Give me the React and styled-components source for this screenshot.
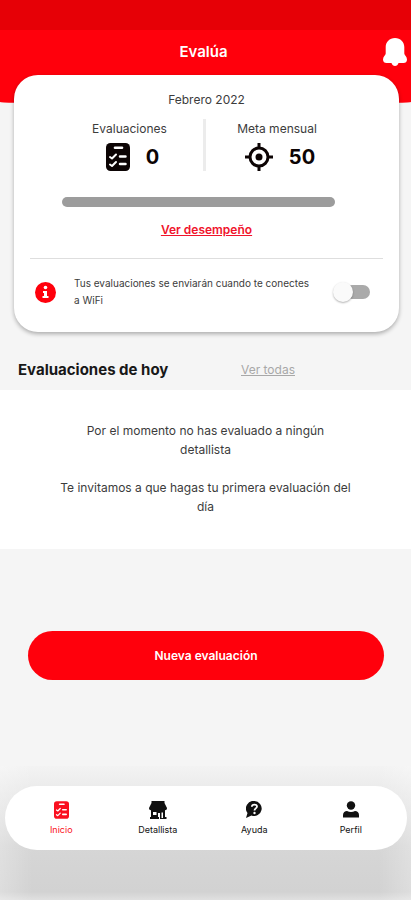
import React, { useState } from "react";
import styled, { createGlobalStyle } from "styled-components";

const GlobalStyle = createGlobalStyle`
  *, *::before, *::after { box-sizing: border-box; }
  body { margin: 0; background: #f5f5f5; color: #3c3c3c; font-family: Inter, "Open Sans", sans-serif; }
  h1, h2, p, dl, dt, dd { margin: 0; }
`;

const Page = styled.div`
  min-height: 100vh;
  display: flex;
  flex-direction: column;
`;
const Header = styled.header`
  padding-bottom: 30px;
  margin-bottom: -29px;
  background: #ff000c;
  border-radius: 0 0 50% 50% / 0 0 2px 2px;
`;
const StatusBar = styled.div`
  height: 30px;
  background: #e60006;
`;
const TitleRow = styled.div`
  height: 44px;
  display: grid;
  grid-template-columns: 1fr auto 1fr;
  align-items: center;
  padding-right: 4px;
`;
const Title = styled.h1`
  grid-column: 2;
  font-size: 15px;
  line-height: 20px;
  font-weight: 600;
  color: #fff;
`;
const BellButton = styled.button`
  justify-self: end;
  display: flex;
  padding: 0;
  border: 0;
  background: none;
  color: #fff;
`;
const Card = styled.section`
  margin: 0 12px 0 14px;
  padding: 15px 16px 23px;
  background: #fff;
  border-radius: 24px;
  box-shadow: 0 2px 4px rgba(0, 0, 0, 0.3);
`;
const Month = styled.p`
  font-size: 12px;
  line-height: 20px;
  text-align: center;
`;
const Stats = styled.dl`
  display: flex;
  justify-content: center;
  margin-top: 9px;
  padding-right: 8px;
`;
const Stat = styled.div`
  width: 146px;
  display: flex;
  flex-direction: column;
  align-items: center;
  gap: 4px;
  & + & { border-left: 3px solid #ececec; }
`;
const StatLabel = styled.dt`
  font-size: 12px;
  line-height: 20px;
`;
const StatValue = styled.dd`
  display: flex;
  align-items: center;
  gap: 16px;
  padding-left: 6px;
  font-size: 20px;
  line-height: 28px;
  font-weight: 700;
  color: #0c0404;
`;
const ProgressTrack = styled.div`
  height: 10px;
  margin: 26px 48px 0 32px;
  border-radius: 5px;
  background: #9c9c9c;
`;
const TextLink = styled.a`
  font-size: 12px;
  line-height: 20px;
  font-weight: ${(p) => (p.$accent ? 600 : 400)};
  color: ${(p) => (p.$accent ? "#f0142c" : "#a8a8a8")};
  text-decoration: underline;
`;
const LinkRow = styled.div`
  display: flex;
  justify-content: center;
  padding: 13px 0 18px;
  border-bottom: 1px solid #dedede;
`;
const WifiRow = styled.div`
  display: flex;
  align-items: center;
  padding: 16px 13px 0 5px;
`;
const WifiLabel = styled.label`
  flex: 1;
  margin: 0 20px 0 18px;
  font-size: 10px;
  line-height: 17px;
`;
const Switch = styled.input`
  appearance: none;
  width: 37px;
  height: 20px;
  margin: 0;
  display: flex;
  align-items: center;
  &::before {
    content: "";
    width: 20px;
    height: 20px;
    border-radius: 50%;
    background: #fafafa;
    box-shadow: 0 1px 2px rgba(0, 0, 0, 0.3);
    z-index: 1;
  }
  &::after {
    content: "";
    flex: 1;
    height: 14px;
    margin-left: -8px;
    border-radius: 7px;
    background: #aaa;
  }
  &:checked { flex-direction: row-reverse; }
  &:checked::after { margin: 0 -8px 0 0; }
`;
const SectionHead = styled.div`
  display: grid;
  grid-template-columns: 223px 1fr;
  align-items: center;
  padding: 28px 18px 10px;
`;
const SectionTitle = styled.h2`
  font-size: 15px;
  line-height: 20px;
  font-weight: 700;
  color: #181818;
`;
const EmptyState = styled.section`
  display: flex;
  flex-direction: column;
  gap: 19px;
  padding: 31px 52px 33px;
  background: #fff;
  font-size: 12px;
  line-height: 19px;
  text-align: center;
`;
const PrimaryButton = styled.button`
  height: 49px;
  margin: 82px 27px 0 28px;
  border: 0;
  border-radius: 25px;
  background: #ff000c;
  color: #fff;
  font: 600 12px/20px Inter, "Open Sans", sans-serif;
`;
const Footer = styled.footer`
  margin-top: auto;
  padding: 20px 4px 50px 5px;
  background:
    linear-gradient(90deg, rgba(255, 255, 255, 0.25), transparent 8%, transparent 92%, rgba(255, 255, 255, 0.25)),
    linear-gradient(#f3f3f3, #ececec 15%, #d6d6d6 60%, #d2d2d2 94%, #e0e0e0);
`;
const Nav = styled.nav`
  height: 64px;
  display: grid;
  grid-template-columns: repeat(4, 1fr);
  padding: 0 8px;
  border-radius: 32px;
  background: #fff;
`;
const NavLink = styled.a`
  display: flex;
  flex-direction: column;
  align-items: center;
  justify-content: center;
  gap: 4px;
  padding-top: 2px;
  font-size: 9px;
  line-height: 14px;
  text-decoration: none;
  color: ${(p) => (p.$active ? "#fa1020" : "#111")};
`;

const BellIcon = () => (
  <svg width="24" height="28" viewBox="0 0 24 28" fill="currentColor" aria-hidden="true">
    <path d="M12 0C6.500 0 2.700 4 2.700 9v6.500C2.700 17 0 18.500 0 21.500 0 24 1.500 25 3.500 25h5c.5 2 2 3 3.500 3s3-1 3.500-3h5c2 0 3.500-1 3.500-3.500 0-3-2.700-4.500-2.700-6V9C21.300 4 17.500 0 12 0Z" />
  </svg>
);
const ChecklistIcon = ({ size = 28 }) => (
  <svg width={Math.round((size * 24) / 28)} height={size} viewBox="0 0 24 28" aria-hidden="true">
    <rect width="24" height="28" rx="4.500" fill="currentColor" />
    <g fill="none" stroke="#fff" strokeLinecap="round" strokeLinejoin="round">
      <path d="M9 4.800h7" strokeWidth="2.600" />
      <path d="M14 13.500h5.500M14 21h5.500" strokeWidth="2.500" />
      <path d="m4 14 2 1.500 4-4M4 21.500 6 23l4-4" strokeWidth="2" />
    </g>
  </svg>
);
const TargetIcon = () => (
  <svg width="28" height="28" viewBox="0 0 28 28" fill="none" stroke="currentColor" strokeWidth="3" aria-hidden="true">
    <circle cx="14" cy="14" r="9" />
    <circle cx="14" cy="14" r="3.500" fill="currentColor" stroke="none" />
    <path d="M14 0v6M14 22v6M0 14h6M22 14h6" />
  </svg>
);
const InfoIcon = () => (
  <svg width="21" height="21" viewBox="0 0 21 21" aria-hidden="true">
    <circle cx="10.500" cy="10.500" r="10.500" fill="#ff000c" />
    <circle cx="10.500" cy="5.500" r="1.800" fill="#fff" />
    <path d="M8 9h4v5h1.500v2h-6v-2H9v-3H8z" fill="#fff" />
  </svg>
);
const StoreIcon = () => (
  <svg width="18" height="18" viewBox="0 0 18 18" fill="currentColor" aria-hidden="true">
    <path d="M2.500 0h13v2L18 7c0 2-1.500 2.500-3 2H3C1.500 9.500 0 9 0 7l2.500-5Z" />
    <path d="M2 8h14v8h1.500v2H11v-6H9v4h1v2H1v-2h1zM4 11v3h3.500v-3z" fillRule="evenodd" />
    <path d="M12.500 11.500h1.500V17h-1.500z" fill="#fff" />
  </svg>
);
const HelpIcon = () => (
  <svg width="16" height="18" viewBox="0 0 16 18" aria-hidden="true">
    <path fill="currentColor" d="M8.500 0a7.500 7.500 0 1 1-3 14.500L0 17l1.500-5A7.500 7.500 0 0 1 8.500 0Z" />
    <path fill="none" stroke="#fff" strokeWidth="1.800" d="M5.800 5.800C6 3 11 3 11 5.500c0 2-2.500 1.800-2.500 4" />
    <circle cx="8.500" cy="12" r="1.200" fill="#fff" />
  </svg>
);
const PersonIcon = () => (
  <svg width="16" height="18" viewBox="0 0 16 18" fill="currentColor" aria-hidden="true">
    <circle cx="8" cy="4.500" r="4.200" />
    <path d="M0 16.500V14c0-2.500 2-4 4-4 2.500 1.300 5.500 1.300 8 0 2 0 4 1.500 4 4v2.500Z" />
  </svg>
);

const navItems = [
  { label: "Inicio", icon: <ChecklistIcon size={18} />, active: true },
  { label: "Detallista", icon: <StoreIcon /> },
  { label: "Ayuda", icon: <HelpIcon /> },
  { label: "Perfil", icon: <PersonIcon /> },
];

export default function App() {
  const [wifi, setWifi] = useState(false);
  return (
    <Page>
      <GlobalStyle />
      <Header>
        <StatusBar />
        <TitleRow>
          <Title>Evalúa</Title>
          <BellButton type="button" aria-label="Notificaciones"><BellIcon /></BellButton>
        </TitleRow>
      </Header>
      <Card>
        <Month>Febrero 2022</Month>
        <Stats>
          <Stat>
            <StatLabel>Evaluaciones</StatLabel>
            <StatValue><ChecklistIcon />0</StatValue>
          </Stat>
          <Stat>
            <StatLabel>Meta mensual</StatLabel>
            <StatValue><TargetIcon />50</StatValue>
          </Stat>
        </Stats>
        <ProgressTrack role="progressbar" aria-label="Evaluaciones del mes" aria-valuenow={0} aria-valuemin={0} aria-valuemax={50} />
        <LinkRow><TextLink $accent href="#desempeno">Ver desempeño</TextLink></LinkRow>
        <WifiRow>
          <InfoIcon />
          <WifiLabel htmlFor="wifi">Tus evaluaciones se enviarán cuando te conectes a WiFi</WifiLabel>
          <Switch id="wifi" type="checkbox" role="switch" checked={wifi} onChange={(e) => setWifi(e.target.checked)} />
        </WifiRow>
      </Card>
      <SectionHead>
        <SectionTitle>Evaluaciones de hoy</SectionTitle>
        <TextLink href="#todas">Ver todas</TextLink>
      </SectionHead>
      <EmptyState>
        <p>Por el momento no has evaluado a ningún<br />detallista</p>
        <p>Te invitamos a que hagas tu primera evaluación del<br />día</p>
      </EmptyState>
      <PrimaryButton type="button">Nueva evaluación</PrimaryButton>
      <Footer>
        <Nav aria-label="Principal">
          {navItems.map((item) => (
            <NavLink key={item.label} href={`#${item.label.toLowerCase()}`} $active={item.active} aria-current={item.active ? "page" : undefined}>
              {item.icon}
              {item.label}
            </NavLink>
          ))}
        </Nav>
      </Footer>
    </Page>
  );
}
